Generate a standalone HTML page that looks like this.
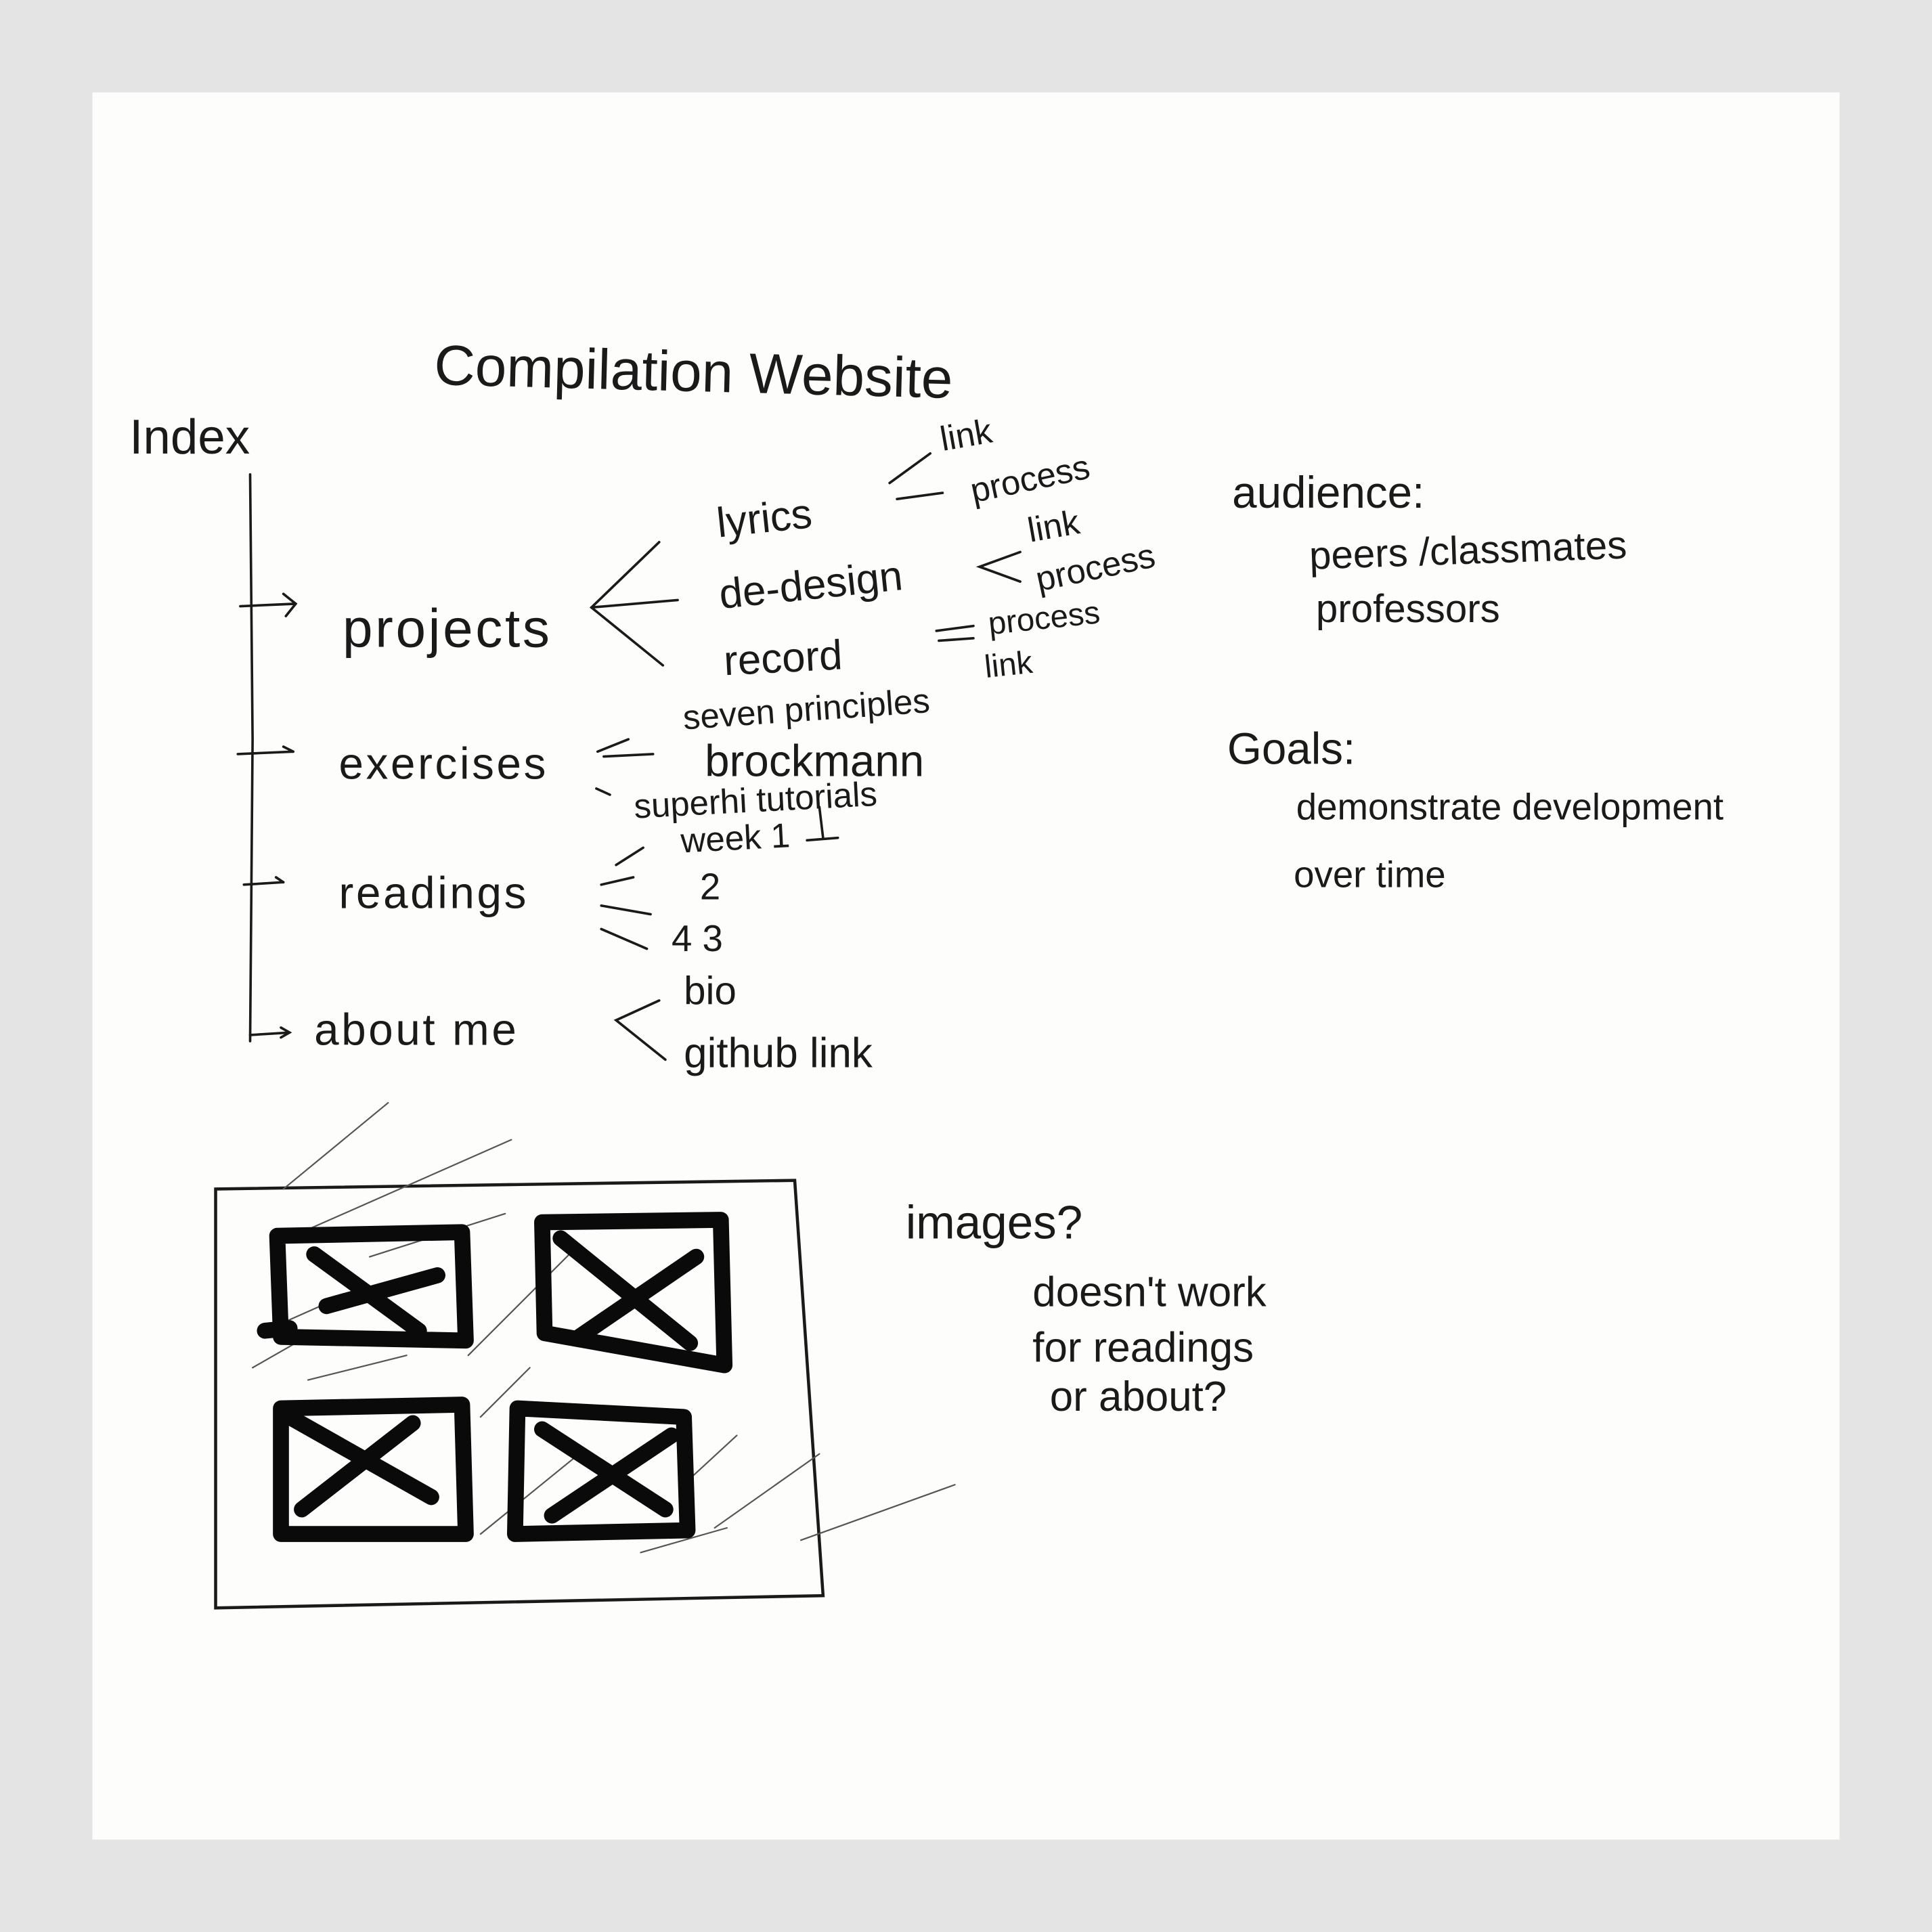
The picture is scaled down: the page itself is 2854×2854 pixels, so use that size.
<!DOCTYPE html>
<html><head><meta charset="utf-8"><style>
html,body{margin:0;padding:0;background:#e4e4e4;}
svg{display:block;}
text{font-family:"Liberation Sans",sans-serif;fill:#1a1a1a;font-weight:300;}
</style></head><body>
<svg width="2854" height="2854" viewBox="0 0 1568 1568" xmlns="http://www.w3.org/2000/svg">
<rect x="0" y="0" width="1568" height="1568" fill="#e4e4e4"/>
<rect x="75" y="75" width="1418" height="1418" fill="#fdfdfc"/>
<g stroke="#1a1a1a" fill="none" stroke-width="2" stroke-linecap="round">
<path d="M203 385 L205 600 L203 845"/>
<path d="M195 492 L240 490 M230 482 L240 490 L232 500"/>
<path d="M193 612 L238 610 M230 606 L238 610"/>
<path d="M198 718 L230 716 M224 712 L230 716"/>
<path d="M203 840 L235 838 M228 834 L235 838 L228 842"/>
<path d="M535 440 L480 493 L538 540 M480 493 L550 487"/>
<path d="M755 368 L722 392 M728 405 L765 400"/>
<path d="M828 448 L795 460 L828 472"/>
<path d="M760 512 L790 508 M762 520 L790 518"/>
<path d="M485 610 L510 600 M490 614 L530 612"/>
<path d="M484 640 L495 645"/>
<path d="M522 688 L500 702 M488 718 L514 712 M488 735 L528 742 M488 754 L525 770"/>
<path d="M535 812 L500 828 L540 860"/>
<path d="M655 682 L680 680 M665 655 L668 680"/>
<path d="M175 965 L645 958 L668 1295 L175 1305 Z" stroke-width="2.5"/>
</g>
<g stroke="#555" fill="none" stroke-width="1.2" stroke-linecap="round">
<path d="M230 965 L315 895 M245 1000 L415 925 M300 1020 L410 985 M215 1080 L260 1060 M205 1110 L240 1090 M390 1245 L470 1180 M560 1200 L598 1165 M580 1240 L665 1180 M520 1260 L590 1240 M650 1250 L775 1205 M250 1120 L330 1100 M380 1100 L470 1010 M390 1150 L430 1110"/>
</g>
<g stroke="#0a0a0a" fill="none" stroke-width="13" stroke-linejoin="round" stroke-linecap="round">
<path d="M225 1003 L375 1000 L378 1088 L228 1085 Z"/>
<path d="M255 1018 L340 1080 M265 1060 L355 1035 M215 1080 L235 1078"/>
<path d="M440 992 L585 990 L588 1108 L442 1082 Z"/>
<path d="M455 1005 L560 1090 M470 1085 L565 1020"/>
<path d="M228 1143 L375 1140 L378 1245 L228 1245 Z"/>
<path d="M235 1150 L350 1215 M245 1225 L335 1155"/>
<path d="M420 1143 L555 1150 L558 1242 L418 1245 Z"/>
<path d="M440 1160 L540 1225 M448 1230 L545 1165"/>
</g>
<text x="352" y="312" font-size="46" transform="rotate(1.5 352 312)">Compilation Website</text>
<text x="105" y="368" font-size="40">Index</text>
<text x="278" y="525" font-size="44" letter-spacing="2">projects</text>
<text x="275" y="632" font-size="36" letter-spacing="2">exercises</text>
<text x="275" y="737" font-size="36" letter-spacing="2">readings</text>
<text x="255" y="848" font-size="36" letter-spacing="2">about me</text>
<text x="583" y="436" font-size="34" transform="rotate(-6 583 436)">lyrics</text>
<text x="585" y="494" font-size="34" transform="rotate(-6 585 494)">de-design</text>
<text x="588" y="548" font-size="34" transform="rotate(-3 588 548)">record</text>
<text x="765" y="366" font-size="28" transform="rotate(-10 765 366)">link</text>
<text x="790" y="408" font-size="28" transform="rotate(-12 790 408)">process</text>
<text x="836" y="440" font-size="28" transform="rotate(-10 836 440)">link</text>
<text x="843" y="480" font-size="28" transform="rotate(-12 843 480)">process</text>
<text x="803" y="515" font-size="26" transform="rotate(-6 803 515)">process</text>
<text x="800" y="550" font-size="26" transform="rotate(-6 800 550)">link</text>
<text x="555" y="592" font-size="28" transform="rotate(-4 555 592)">seven principles</text>
<text x="572" y="630" font-size="36">brockmann</text>
<text x="515" y="664" font-size="28" transform="rotate(-3 515 664)">superhi tutorials</text>
<text x="553" y="692" font-size="28" transform="rotate(-3 553 692)">week 1</text>
<text x="568" y="730" font-size="30">2</text>
<text x="545" y="772" font-size="30">4 3</text>
<text x="555" y="815" font-size="32">bio</text>
<text x="555" y="866" font-size="34">github link</text>
<text x="1000" y="412" font-size="36">audience:</text>
<text x="1063" y="462" font-size="32" transform="rotate(-2 1063 462)">peers /classmates</text>
<text x="1068" y="505" font-size="32">professors</text>
<text x="996" y="620" font-size="36">Goals:</text>
<text x="1052" y="665" font-size="30">demonstrate development</text>
<text x="1050" y="720" font-size="30">over time</text>
<text x="735" y="1005" font-size="38">images?</text>
<text x="838" y="1060" font-size="34">doesn't work</text>
<text x="838" y="1105" font-size="34">for readings</text>
<text x="852" y="1145" font-size="34">or about?</text>
</svg>
</body></html>
